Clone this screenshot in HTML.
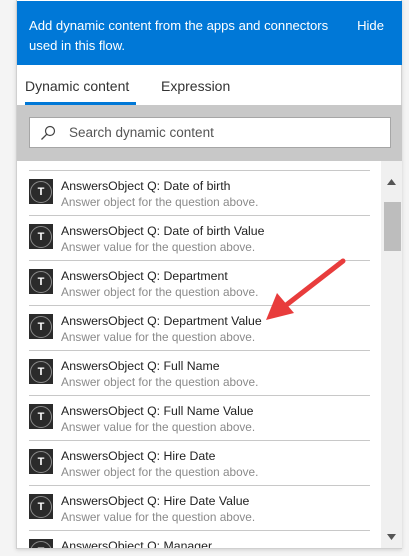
<!DOCTYPE html>
<html><head><meta charset="utf-8"><style>
*{margin:0;padding:0;box-sizing:border-box}
body{width:409px;height:556px;background:#f4f4f4;font-family:"Segoe UI","Liberation Sans",sans-serif;position:relative;overflow:hidden}
.panel{position:absolute;left:16px;top:0;width:386px;height:549px;background:#fff;border:1px solid #d0d0d0;border-top:none;box-shadow:0 1px 4px rgba(0,0,0,.15)}
.hdr{position:absolute;left:0;top:1px;width:385px;height:64px;background:#0078d7;color:#fff;font-size:13.1px;line-height:20px;padding:15px 0 0 12px}
.hdr .t{width:320px}
.hdr .h{position:absolute;right:18px;top:15px}
.tab{position:absolute;top:78px;font-size:14px;color:#333}
.ul{position:absolute;left:8px;top:102px;width:111px;height:3px;background:#0078d7}
.gray{position:absolute;left:0;top:105px;width:385px;height:56px;background:#c8c8c8}
.search{position:absolute;left:12px;top:12px;width:362px;height:31px;background:#fff;border:1px solid #a6a6a6;font-size:13.5px;color:#555;padding:7px 0 0 39px}
.search svg{position:absolute;left:10px;top:7px}
.list{position:absolute;left:0;top:161px;width:385px;height:387px;overflow:hidden}
.sep{position:absolute;left:12px;width:341px;height:1px;background:#c8c8c8}
.it{position:absolute;left:12px}
.ic{position:absolute;left:0;top:9px;width:24px;height:25px;background:#2b2b2b}
.ic i{position:absolute;left:1px;top:1.5px;width:22px;height:22px;border:1px solid #8a8a8a;border-radius:50%;color:#fff;font-style:normal;font-size:11px;font-weight:bold;text-align:center;line-height:20px}
.ti{position:absolute;left:32px;top:9px;font-size:12.3px;color:#222;white-space:nowrap}
.de{position:absolute;left:32px;top:25px;font-size:11.8px;color:#8a8a8a;white-space:nowrap}
.sb{position:absolute;left:364px;top:0;width:21px;height:387px;background:#f0f0f0}
.th{position:absolute;left:3px;top:41px;width:17px;height:49px;background:#bdbdbd}
</style></head><body>
<div class="panel">
<div class="hdr"><div class="t">Add dynamic content from the apps and connectors used in this flow.</div><div class="h">Hide</div></div>
<div class="tab" style="left:8px">Dynamic content</div>
<div class="tab" style="left:144px">Expression</div>
<div class="ul"></div>
<div class="gray"><div class="search"><svg width="16" height="16" viewBox="0 0 16 16"><circle cx="10" cy="6" r="4.5" fill="none" stroke="#444" stroke-width="1.2"/><line x1="6.7" y1="9.3" x2="1.5" y2="14.5" stroke="#444" stroke-width="1.3"/></svg>Search dynamic content</div></div>
<div class="list">
<div class="sep" style="top:9px"></div>
<div class="it" style="top:9px"><div class="ic"><i>T</i></div><div class="ti">AnswersObject Q: Date of birth</div><div class="de">Answer object for the question above.</div></div>
<div class="sep" style="top:54px"></div>
<div class="it" style="top:54px"><div class="ic"><i>T</i></div><div class="ti">AnswersObject Q: Date of birth Value</div><div class="de">Answer value for the question above.</div></div>
<div class="sep" style="top:99px"></div>
<div class="it" style="top:99px"><div class="ic"><i>T</i></div><div class="ti">AnswersObject Q: Department</div><div class="de">Answer object for the question above.</div></div>
<div class="sep" style="top:144px"></div>
<div class="it" style="top:144px"><div class="ic"><i>T</i></div><div class="ti">AnswersObject Q: Department Value</div><div class="de">Answer value for the question above.</div></div>
<div class="sep" style="top:189px"></div>
<div class="it" style="top:189px"><div class="ic"><i>T</i></div><div class="ti">AnswersObject Q: Full Name</div><div class="de">Answer object for the question above.</div></div>
<div class="sep" style="top:234px"></div>
<div class="it" style="top:234px"><div class="ic"><i>T</i></div><div class="ti">AnswersObject Q: Full Name Value</div><div class="de">Answer value for the question above.</div></div>
<div class="sep" style="top:279px"></div>
<div class="it" style="top:279px"><div class="ic"><i>T</i></div><div class="ti">AnswersObject Q: Hire Date</div><div class="de">Answer object for the question above.</div></div>
<div class="sep" style="top:324px"></div>
<div class="it" style="top:324px"><div class="ic"><i>T</i></div><div class="ti">AnswersObject Q: Hire Date Value</div><div class="de">Answer value for the question above.</div></div>
<div class="sep" style="top:369px"></div>
<div class="it" style="top:369px"><div class="ic"><i>T</i></div><div class="ti">AnswersObject Q: Manager</div><div class="de">Answer object for the question above.</div></div>
<div class="sb"><svg style="position:absolute;left:6px;top:18px" width="9" height="6"><polygon points="0,6 4.5,0 9,6" fill="#555"/></svg><div class="th"></div><svg style="position:absolute;left:6px;top:373px" width="9" height="6"><polygon points="0,0 4.5,6 9,0" fill="#555"/></svg></div>
</div>
</div>
<svg style="position:absolute;left:0;top:0" width="409" height="556"><line x1="343" y1="261" x2="285" y2="306" stroke="#e83c3c" stroke-width="5" stroke-linecap="round"/><polygon points="266,320 277,293 294,313" fill="#e83c3c"/></svg>
</body></html>
